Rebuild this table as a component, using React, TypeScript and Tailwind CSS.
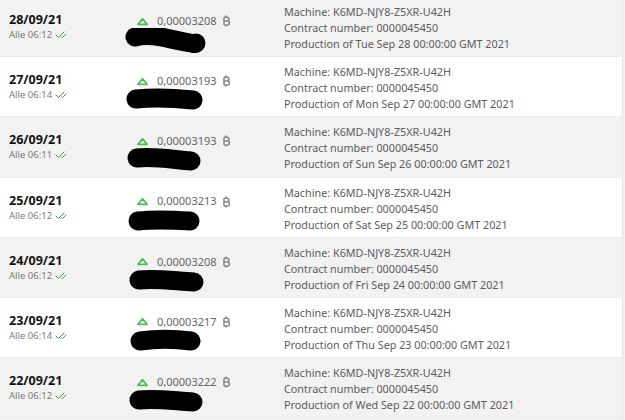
import { CheckCheck } from "lucide-react"

type Row = {
  date: string
  time: string
  amount: string
  day: string
  blob: string
}

const rows: Row[] = [
  { date: "28/09/21", time: "06:12", amount: "0,00003208", day: "Tue Sep 28", blob: "M10 9 C 25 5, 40 10, 55 13 S 70 16, 71 15" },
  { date: "27/09/21", time: "06:14", amount: "0,00003193", day: "Mon Sep 27", blob: "M11 11 C 30 9, 50 10, 68 12" },
  { date: "26/09/21", time: "06:11", amount: "0,00003193", day: "Sun Sep 26", blob: "M12 10 C 30 8, 50 12, 66 13" },
  { date: "25/09/21", time: "06:12", amount: "0,00003213", day: "Sat Sep 25", blob: "M13 12 C 30 10, 50 11, 65 12" },
  { date: "24/09/21", time: "06:12", amount: "0,00003208", day: "Fri Sep 24", blob: "M14 11 C 30 9, 50 12, 69 13" },
  { date: "23/09/21", time: "06:14", amount: "0,00003217", day: "Thu Sep 23", blob: "M15 12 C 30 10, 50 10, 66 12" },
  { date: "22/09/21", time: "06:12", amount: "0,00003222", day: "Wed Sep 22", blob: "M14 11 C 30 9, 50 12, 68 13" },
]

function UpTriangle() {
  return (
    <svg width="13" height="9" viewBox="0 0 13 9" fill="none">
      <path d="M2 7.3 L6.5 1.7 L11 7.3 Z" stroke="#4cbb5a" strokeWidth="1.8" strokeLinejoin="round" />
    </svg>
  )
}

// upright baht-style bitcoin mark
function BtcMark() {
  return (
    <svg width="9" height="12" viewBox="0 0 9 12" fill="none" className="ml-[5px]">
      <path
        d="M2 2.2 H5 a1.9 1.9 0 0 1 0 3.8 H2 M2 6 H5.4 a2 2 0 0 1 0 4 H2 M2 2.2 V10 M4 0.6 V2.2 M4 10 V11.6"
        stroke="#8a8a8a"
        strokeWidth="1.6"
      />
    </svg>
  )
}

export default function App() {
  return (
    <div className="w-[625px] h-[420px] overflow-hidden bg-[#f2f2f2]" style={{ fontFamily: "'Noto Sans', 'DejaVu Sans', sans-serif" }}>
      <div className="w-[623px] h-[423px] border-r border-[#e4e4e4] -mt-[3px]">
        {rows.map((r, i) => (
          <div
            key={r.date}
            className={`flex h-[60.2px] border-b border-[#ebebeb] ${i % 2 === 0 ? "bg-[#f2f2f2]" : "bg-white"}`}
          >
            {/* date */}
            <div className="w-[127px] pl-[9px] pt-[14px]">
              <div className="text-[12.5px] leading-[18px] font-bold text-[#111]">{r.date}</div>
              <div className="flex items-center gap-[3px] text-[9.5px] leading-[12px] text-[#7a7a7a]">
                Alle {r.time}
                <CheckCheck size={12} strokeWidth={2} className="text-[#43a047]" />
              </div>
            </div>

            {/* amount */}
            <div className="w-[150px] pt-[16px]">
              <div className="flex items-center pl-[9px] h-[16px]">
                <UpTriangle />
                <span className="ml-[8px] text-[11px] text-[#666]">{r.amount}</span>
                <BtcMark />
              </div>
              <svg width="90" height="26" viewBox="0 0 90 26" className="-ml-[2px] mt-[-1px]">
                <path d={r.blob} stroke="#000" strokeWidth="19" strokeLinecap="round" fill="none" />
              </svg>
            </div>

            {/* details */}
            <div className="pl-[7px] pt-[7px] text-[10.8px] leading-[16px] text-[#5c5c5c]">
              <div>Machine: K6MD-NJY8-Z5XR-U42H</div>
              <div>Contract number: 0000045450</div>
              <div>Production of {r.day} 00:00:00 GMT 2021</div>
            </div>
          </div>
        ))}
      </div>
    </div>
  )
}
